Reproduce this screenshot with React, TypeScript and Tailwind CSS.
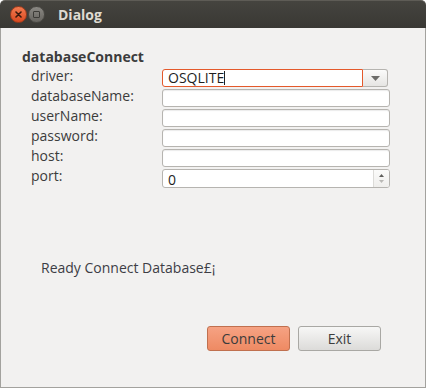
import type { ReactNode } from 'react';

const font = { fontFamily: '"Open Sans", "Liberation Sans", sans-serif' };

function TitleBar() {
  return (
    <div className="flex h-[28px] items-center rounded-t-[5px] border-t border-[#5e5c56] bg-gradient-to-b from-[#45443f] to-[#393834] pl-[10px]">
      {/* close */}
      <div className="flex h-[17px] w-[17px] items-center justify-center rounded-full border border-[#9e3b1c] bg-gradient-to-b from-[#f27a4f] to-[#d9481e]">
        <svg width="7" height="7" viewBox="0 0 7 7">
          <path d="M1 1L6 6M6 1L1 6" stroke="#3a1a0e" strokeWidth="1.6" strokeLinecap="round" />
        </svg>
      </div>
      {/* minimize-ish */}
      <div className="ml-[1px] flex h-[17px] w-[17px] items-center justify-center rounded-full border border-[#4a4944] bg-gradient-to-b from-[#8a8883] to-[#66645f]">
        <div className="h-[7px] w-[7px] rounded-[1px] border border-[#3c3b37]" />
      </div>
      <span className="ml-[13px] text-[14px] font-bold text-[#dfdbd2]">Dialog</span>
    </div>
  );
}

function Row({ label, children }: { label: string; children: ReactNode }) {
  return (
    <div className="flex h-[20px] items-start">
      <span className="w-[140px] pl-[9px] pt-[1px] text-[14px] leading-[14px]">{label}</span>
      <div className="pt-[1px]">{children}</div>
    </div>
  );
}

function TextBox() {
  return (
    <div className="h-[18px] w-[228px] rounded-[3px] border border-[#b6b4b0] bg-white shadow-[inset_0_1px_1px_rgba(0,0,0,0.08)]" />
  );
}

function Combo() {
  return (
    <div className="flex h-[18px] w-[226px]">
      <div className="flex flex-1 items-end overflow-hidden rounded-l-[3px] border border-[#e4592b] bg-white pl-[5px]">
        <span className="text-[14px] leading-[17px] text-[#1e1e1e]">OSQLITE</span>
        <span className="mb-[1px] h-[14px] w-px bg-[#222]" />
      </div>
      <div className="flex w-[25px] items-center justify-center rounded-r-[3px] border border-l-0 border-[#b6b4b0] bg-gradient-to-b from-[#fbfbfa] to-[#e6e5e3]">
        <svg width="9" height="5" viewBox="0 0 9 5">
          <path d="M0 0H9L4.5 5Z" fill="#6d6c69" />
        </svg>
      </div>
    </div>
  );
}

function SpinBox() {
  return (
    <div className="flex h-[19px] w-[228px] overflow-hidden rounded-[3px] border border-[#b6b4b0] bg-white">
      <span className="flex-1 pl-[5px] text-[14px] leading-[19px] text-[#1e1e1e]">0</span>
      <div className="flex w-[16px] flex-col items-center justify-center gap-[3px] border-l border-[#dcdbd8] bg-gradient-to-b from-[#fbfbfa] to-[#efeeec]">
        <svg width="5" height="3" viewBox="0 0 5 3">
          <path d="M0 3H5L2.5 0Z" fill="#5f5e5b" />
        </svg>
        <svg width="5" height="3" viewBox="0 0 5 3">
          <path d="M0 0H5L2.5 3Z" fill="#b9b8b5" />
        </svg>
      </div>
    </div>
  );
}

export default function App() {
  return (
    <div className="flex h-[388px] w-[426px] flex-col text-[#3c3c3c]" style={font}>
      <TitleBar />
      <div className="flex flex-1 flex-col border-x border-b border-[#a3a29e] bg-[#f2f1f0] pl-[21px] pt-[18.5px]">
        <div className="mb-[1.5px] text-[14px] font-bold leading-[20px]">databaseConnect</div>
        <Row label="driver:">
          <Combo />
        </Row>
        <Row label="databaseName:">
          <TextBox />
        </Row>
        <Row label="userName:">
          <TextBox />
        </Row>
        <Row label="password:">
          <TextBox />
        </Row>
        <Row label="host:">
          <TextBox />
        </Row>
        <Row label="port:">
          <SpinBox />
        </Row>

        <div className="ml-[19px] mt-[73px] text-[14px] leading-[14px] text-[#3d3d45]">
          Ready Connect Database£¡
        </div>

        <div className="mr-[44px] mt-[51px] flex justify-end gap-[8px]">
          <button className="h-[25px] w-[83px] rounded-[3px] border border-[#c0704f] bg-gradient-to-b from-[#f6a283] to-[#ee8a63] text-[14px] text-[#3c3c3c]">
            Connect
          </button>
          <button className="h-[25px] w-[83px] rounded-[3px] border border-[#a9a8a4] bg-gradient-to-b from-[#f7f7f6] to-[#dcdbd9] text-[14px] text-[#3c3c3c]">
            Exit
          </button>
        </div>
      </div>
    </div>
  );
}
